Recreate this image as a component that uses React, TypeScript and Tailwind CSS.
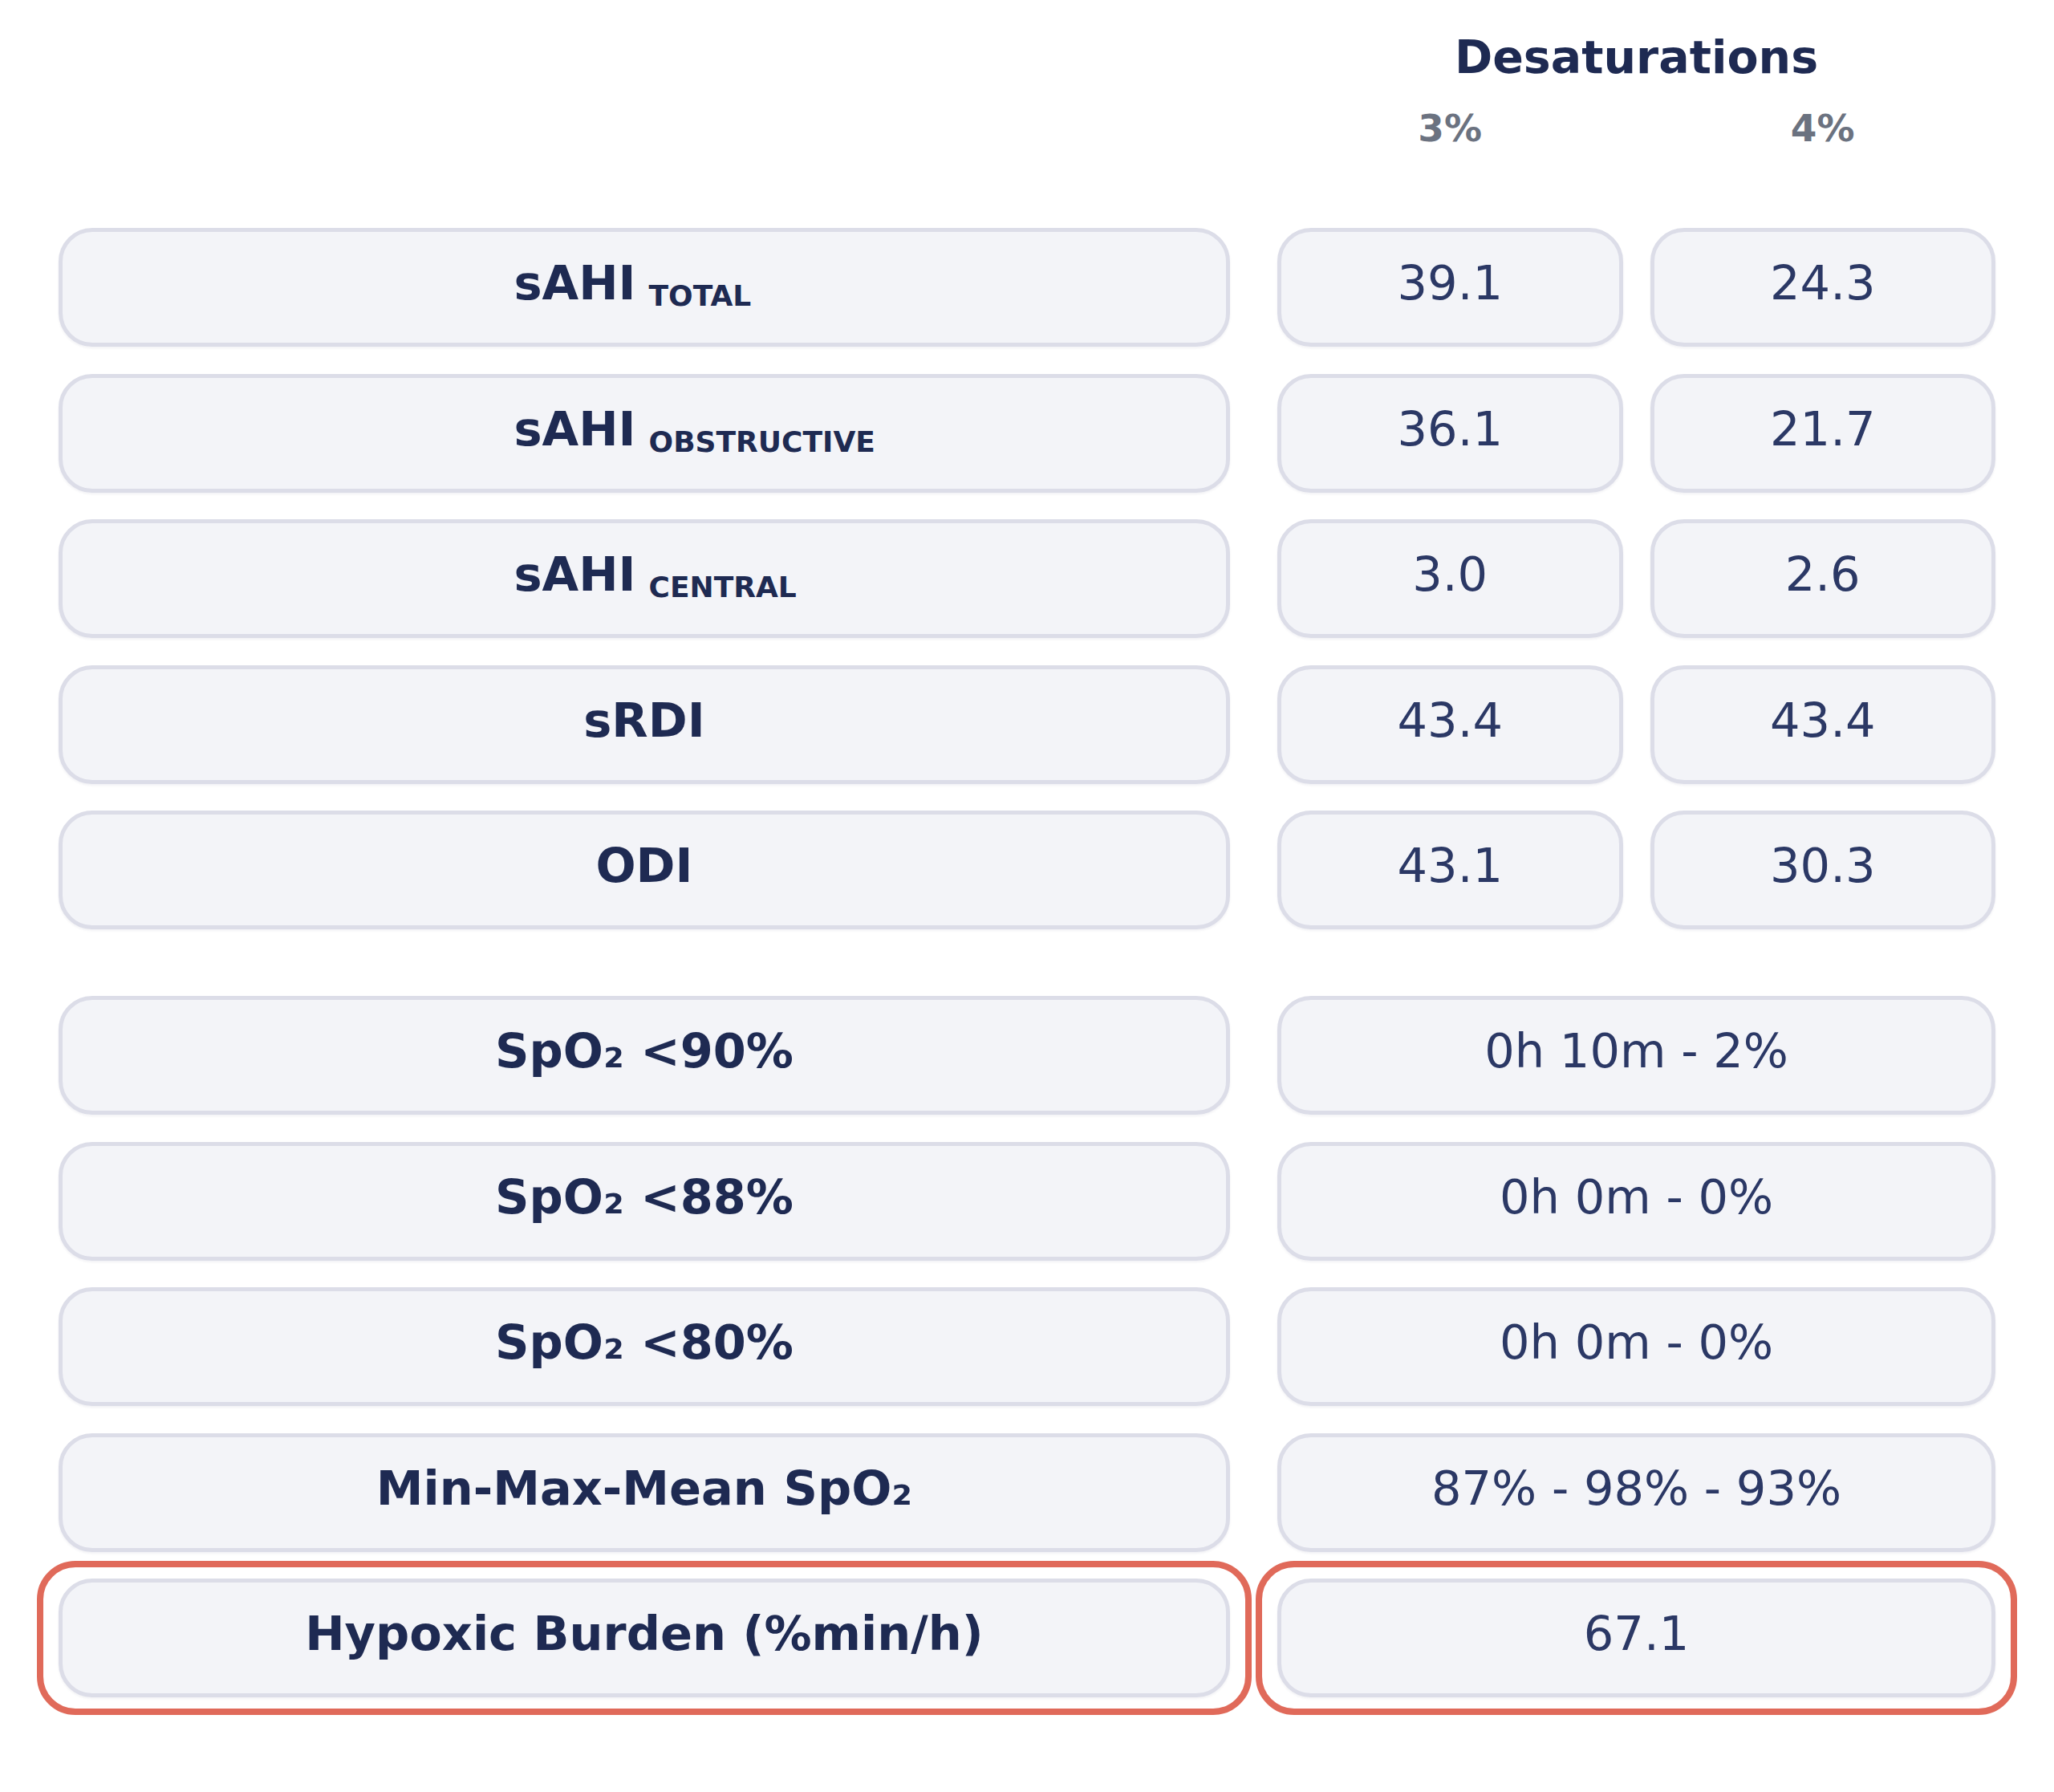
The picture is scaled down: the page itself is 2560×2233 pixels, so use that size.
import type { ReactNode } from "react";

type MetricRow = {
  label: ReactNode;
  values: string[];
  highlight?: boolean;
};

const cell =
  "flex h-[148px] items-center justify-center rounded-[42px] border-[5px] border-[#dcdde8] bg-[#f3f4f8] pb-[9px] shadow-[0_2px_3px_rgba(30,40,80,0.06)]";

function Sahi({ sub }: { sub: string }) {
  return (
    <span className="whitespace-nowrap">
      sAHI
      <span className="ml-[16px] inline-block w-[157px] text-left align-[-8px] text-[36px]">
        {sub}
      </span>
    </span>
  );
}

function SpO2({ pre = "", post = "" }: { pre?: string; post?: string }) {
  return (
    <span className="whitespace-nowrap">
      {pre}SpO₂{post}
    </span>
  );
}

const indexRows: MetricRow[] = [
  { label: <Sahi sub="TOTAL" />, values: ["39.1", "24.3"] },
  { label: <Sahi sub="OBSTRUCTIVE" />, values: ["36.1", "21.7"] },
  { label: <Sahi sub="CENTRAL" />, values: ["3.0", "2.6"] },
  { label: "sRDI", values: ["43.4", "43.4"] },
  { label: "ODI", values: ["43.1", "30.3"] },
];

const oxygenRows: MetricRow[] = [
  { label: <SpO2 post=" <90%" />, values: ["0h 10m - 2%"] },
  { label: <SpO2 post=" <88%" />, values: ["0h 0m - 0%"] },
  { label: <SpO2 post=" <80%" />, values: ["0h 0m - 0%"] },
  { label: <SpO2 pre="Min-Max-Mean " />, values: ["87% - 98% - 93%"] },
  { label: "Hypoxic Burden (%min/h)", values: ["67.1"], highlight: true },
];

function Highlight({ on, children }: { on?: boolean; children: ReactNode }) {
  return (
    <div className="relative flex-1">
      {children}
      {on ? (
        <div className="pointer-events-none absolute -inset-x-[27px] -inset-y-[22px] rounded-[48px] border-[8px] border-[#e06a5a]" />
      ) : null}
    </div>
  );
}

function Row({ row }: { row: MetricRow }) {
  return (
    <div className="flex">
      <div className="w-[1460px] shrink-0">
        <Highlight on={row.highlight}>
          <div className={`${cell} text-[59px] font-bold text-[#1e2a52]`}>{row.label}</div>
        </Highlight>
      </div>
      <div className="ml-[59px] flex flex-1 gap-[34px]">
        {row.values.map((value, i) => (
          <Highlight key={i} on={row.highlight}>
            <div className={`${cell} text-[59px] text-[#2b3865]`}>{value}</div>
          </Highlight>
        ))}
      </div>
    </div>
  );
}

export default function App() {
  return (
    <div className="min-h-[2233px] bg-white px-[73px] pt-[43px] font-['DejaVu_Sans',sans-serif]">
      <div className="ml-[1519px]">
        <h2 className="text-center text-[57px] leading-none font-bold text-[#1e2a52]">
          Desaturations
        </h2>
        <div className="mt-[36px] flex gap-[34px] text-[47px] leading-none font-bold text-[#6b7280]">
          <span className="flex-1 text-center">3%</span>
          <span className="flex-1 text-center">4%</span>
        </div>
      </div>

      <div className="mt-[101px] flex flex-col gap-[33.5px]">
        {indexRows.map((row, i) => (
          <Row key={i} row={row} />
        ))}
      </div>

      <div className="mt-[83px] flex flex-col gap-[33.5px]">
        {oxygenRows.map((row, i) => (
          <Row key={i} row={row} />
        ))}
      </div>
    </div>
  );
}
